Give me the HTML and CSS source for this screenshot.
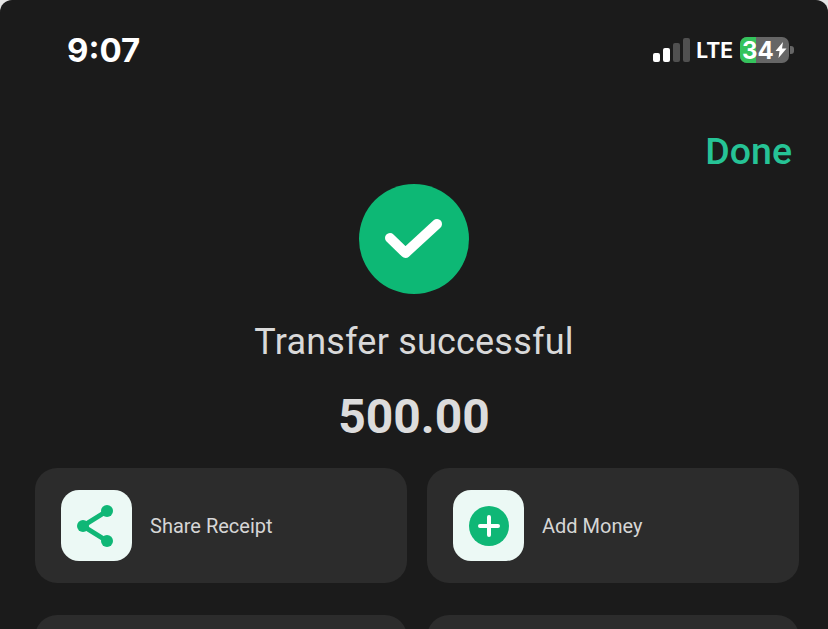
FILE: index.html
```html
<!DOCTYPE html>
<html>
<head>
<title>Transfer successful</title>
<link rel="stylesheet" href="styles.css">
</head>
<body>
<div class="screen">
  <div class="status">
    <span class="time">9:07</span>
    <div class="status-right">
      <div class="signal"><i class="on s1"></i><i class="on s2"></i><i class="s3"></i><i class="s4"></i></div>
      <span class="lte">LTE</span>
      <div class="battery">
        <div class="battery-body"><span class="battery-fill"></span><span class="battery-text">34</span>
          <svg class="bolt" width="12" height="16" viewBox="0 0 12 16"><path d="M8 0 0.5 9h4L3.5 16 11.5 6.500H7z" fill="#fff"/></svg>
        </div>
        <span class="battery-tip"></span>
      </div>
    </div>
  </div>

  <div class="top-action"><span class="done">Done</span></div>

  <div class="result">
    <div class="check">
      <svg width="110" height="110" viewBox="0 0 110 110"><path d="M31 54 L46.500 69 L78 40" fill="none" stroke="#fff" stroke-width="10" stroke-linecap="round" stroke-linejoin="round"/></svg>
    </div>
    <div class="result-title">Transfer successful</div>
    <div class="amount">500.00</div>
  </div>

  <div class="actions">
    <div class="action">
      <div class="action-icon">
        <svg class="share" width="36" height="42" viewBox="0 0 36 42"><path d="M30 6 6 21 30 36" fill="none" stroke="#0fb776" stroke-width="5"/><circle cx="30" cy="6" r="6" fill="#0fb776"/><circle cx="6" cy="21" r="6" fill="#0fb776"/><circle cx="30" cy="36" r="6" fill="#0fb776"/></svg>
      </div>
      <span class="action-label">Share Receipt</span>
    </div>
    <div class="action">
      <div class="action-icon">
        <svg width="40" height="40" viewBox="0 0 40 40"><circle cx="20" cy="20" r="20" fill="#0fb776"/><path d="M20 11v18M11 20h18" stroke="#fff" stroke-width="4" stroke-linecap="round"/></svg>
      </div>
      <span class="action-label">Add Money</span>
    </div>
    <div class="action"></div>
    <div class="action"></div>
  </div>
</div>
</body>
</html>
```

FILE: styles.css
```css
html, body { margin: 0; padding: 0; height: 100%; background: #e4e4e4; overflow: hidden; }

.screen { height: 629px; overflow: hidden; border-radius: 12px 12px 0 0; font-family: Roboto, sans-serif; color: #dcdcdc; background: #1b1b1b; }

.status { display: flex; justify-content: space-between; align-items: center; height: 36px; padding: 32px 34px 0 67px; }
.time { font-family: Inter, sans-serif; font-weight: 700; font-size: 33px; color: #fff; }
.status-right { display: flex; align-items: center; }

.signal { display: flex; align-items: flex-end; gap: 3px; height: 24px; margin-right: 6px; }
.signal i { display: block; width: 7px; border-radius: 2px; background: #505050; }
.signal .on { background: #fff; }
.s1 { height: 9px; }
.s2 { height: 14px; }
.s3 { height: 19px; }
.s4 { height: 24px; }

.lte { font-family: Inter, sans-serif; font-weight: 700; font-size: 21px; color: #fff; margin-right: 7px; }

.battery { display: flex; align-items: center; }
.battery-body { position: relative; display: flex; align-items: center; width: 49px; height: 26px; border-radius: 7px; background: #666; overflow: hidden; }
.battery-fill { position: absolute; left: 0; top: 0; bottom: 0; width: 16px; background: #34c35c; }
.battery-text { position: relative; font-family: Inter, sans-serif; font-weight: 700; font-size: 24px; color: #fff; margin-left: 2px; }
.bolt { position: relative; margin-left: 1px; }
.battery-tip { width: 4px; height: 8px; margin-left: 1px; border-radius: 0 3px 3px 0; background: #666; }

.top-action { display: flex; justify-content: flex-end; padding: 61px 36px 0 0; }
.done { font-size: 37.500px; font-weight: 500; line-height: 44px; color: #26c396; }

.result { display: flex; flex-direction: column; align-items: center; margin-top: 11px; }
.check { width: 110px; height: 110px; border-radius: 50%; background: #0db875; }
.check svg { display: block; }
.result-title { margin-top: 26px; font-size: 36px; line-height: 44px; letter-spacing: 0.2px; color: #d9d9d9; }
.amount { margin-top: 25px; font-size: 48px; line-height: 56px; font-weight: 700; color: #dcdcdc; }

.actions { display: grid; grid-template-columns: 372px 372px; gap: 32px 20px; padding: 23px 0 0 35px; }
.action { display: flex; align-items: center; height: 115px; padding-left: 26px; border-radius: 22px; background: #2c2c2c; }
.action-icon { display: flex; align-items: center; justify-content: center; width: 71px; height: 71px; border-radius: 18px; background: #ecf9f5; flex: none; }
.share { margin-right: 3px; }
.action-label { margin-left: 18px; font-size: 20px; color: #d6d6d6; }
```
